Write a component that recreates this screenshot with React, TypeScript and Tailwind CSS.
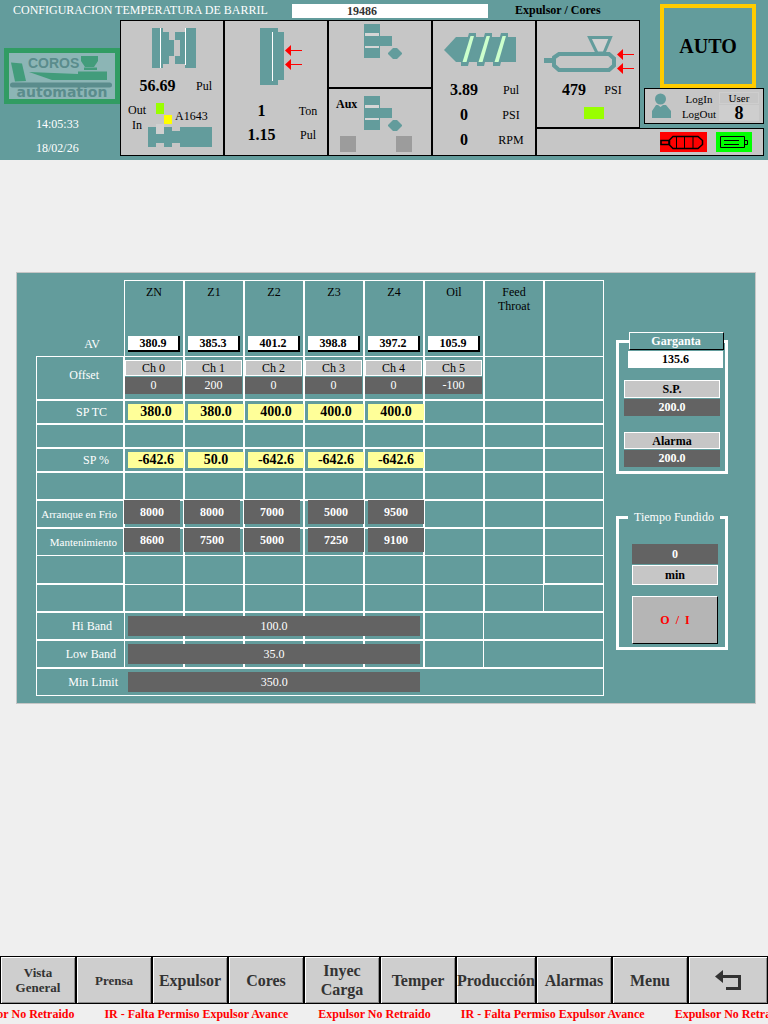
import React from "react";

const ZONES = [
  { name: "ZN", av: "380.9", ch: "Ch 0", offset: "0", tc: "380.0", pct: "-642.6", cold: "8000", hold: "8600" },
  { name: "Z1", av: "385.3", ch: "Ch 1", offset: "200", tc: "380.0", pct: "50.0", cold: "8000", hold: "7500" },
  { name: "Z2", av: "401.2", ch: "Ch 2", offset: "0", tc: "400.0", pct: "-642.6", cold: "7000", hold: "5000" },
  { name: "Z3", av: "398.8", ch: "Ch 3", offset: "0", tc: "400.0", pct: "-642.6", cold: "5000", hold: "7250" },
  { name: "Z4", av: "397.2", ch: "Ch 4", offset: "0", tc: "400.0", pct: "-642.6", cold: "9500", hold: "9100" },
  { name: "Oil", av: "105.9", ch: "Ch 5", offset: "-100" },
  { name: "Feed Throat" },
  { name: "" },
];

const BANDS = [
  { label: "Hi Band", value: "100.0", pad: "pr-3" },
  { label: "Low Band", value: "35.0", pad: "pr-2" },
];

const NAV = [
  { label: "Vista General", size: "text-[13px] leading-[15px] px-3" },
  { label: "Prensa", size: "text-[13px] leading-[15px]" },
  { label: "Expulsor", size: "text-base leading-[19px]" },
  { label: "Cores", size: "text-base leading-[19px]" },
  { label: "Inyec Carga", size: "text-base leading-[19px] px-3" },
  { label: "Temper", size: "text-base leading-[19px]" },
  { label: "Producción", size: "text-base leading-[19px]" },
  { label: "Alarmas", size: "text-base leading-[19px]" },
  { label: "Menu", size: "text-base leading-[19px]" },
];

const ALERTS = [
  "Expulsor No Retraido",
  "IR - Falta Permiso Expulsor Avance",
  "Expulsor No Retraido",
  "IR - Falta Permiso Expulsor Avance",
  "Expulsor No Retraido",
];

const Logo = () => (
  <svg viewBox="0 0 116 56" className="h-14 w-[116px]">
    <rect width="116" height="56" fill="#319c63" />
    <rect x="5" y="5" width="106" height="46" fill="#8cb5b5" />
    <path d="M7 14.5 L18 15.5 L22 33 L11 33.500 Z" fill="#429c7b" />
    <path d="M77 8 H94 V13 L90 19 H81 L77 13 Z" fill="#429c7b" />
    <path d="M80 19.500 H93 V22 H80 Z" fill="#429c7b" />
    <path d="M25 24 L74 26 V23.500 H103 V32 H48 Z" fill="#429c7b" />
    <rect x="6" y="34.500" width="102" height="5" rx="2.500" fill="#5a8c8c" />
    <text x="24" y="20" fontSize="14" fontWeight="bold" fontFamily="Liberation Sans, sans-serif" fill="#5a8c8c">
      COROS
    </text>
    <text x="58" y="49" textAnchor="middle" fontSize="14" fontWeight="bold" fontFamily="DejaVu Sans, sans-serif" fill="#5a8c8c">
      automation
    </text>
  </svg>
);

const MoldIcon = () => (
  <svg viewBox="0 0 44 40" className="ml-[31px] h-10 w-11" fill="#639c9c" shapeRendering="crispEdges">
    <path d="M0 0 H11 V4 H17 V12 H22 V28 H17 V36 H11 V40 H0 Z" />
    <path d="M33 0 H44 V40 H33 V36 H23 V28 H28 V12 H23 V4 H33 Z" />
    <path d="M8 0 H9 V41 H8 Z M33 0 H34 V37 H33 Z" fill="#fff" />
  </svg>
);

const PlateIcon = () => (
  <svg viewBox="0 0 42 57" className="ml-[35px] h-[57px] w-[42px]" fill="#639c9c">
    <path d="M0 0 H18 V4 H24 V52 H18 V57 H0 Z" />
    <path d="M12 4 H13 V53 H12 Z" fill="#fff" />
    <path d="M25 22.500 L31 17 V22 H42 V23 H31 V28 Z M25 36.500 L31 31 V36 H42 V37 H31 V42 Z" fill="#f00" />
  </svg>
);

const CoreIcon = () => (
  <svg viewBox="0 0 38 36" className="h-9 w-[38px]" fill="#639c9c">
    <path d="M0 0 H16 V12 H28 V22 H16 V34 H0 Z" />
    <path d="M1 9 H15 V12 H1 Z M1 22 H15 V24 H1 Z" fill="#d6d6d6" />
    <path d="M29 24 H33 L38 29 V30 L33 35 H29 L24 30 V29 Z" />
  </svg>
);

const ScrewIcon = () => (
  <svg viewBox="0 0 72 36" className="ml-[11px] h-9 w-[72px]" fill="#639c9c">
    <path d="M0 18 L12 5 H72 V30 H12 Z" />
    {[0, 16, 32].map((x) => (
      <g key={x} transform={`translate(${x} 0)`}>
        <path d="M25 1 H32 V5 L25 30 L24 34 H17 V30 Z" />
        <path d="M26.500 4 H30 L22.500 30 H18.500 Z" fill="#cfc" />
      </g>
    ))}
  </svg>
);

const BarrelIcon = () => (
  <svg viewBox="0 0 90 38" className="ml-[7px] h-[38px] w-[90px]" fill="none" stroke="#639c9c">
    <path d="M0 24.500 H10" strokeWidth="5" />
    <path d="M10 21.500 L15 18 H65 L70 22.500 V29.500 L65 34 H15 L10 29.500 Z" strokeWidth="4" />
    <path d="M45.500 1.500 H66.500 L60 17 H53 Z" strokeWidth="3" fill="#d0d0d0" />
    <path d="M73 18.500 L79 13 V18 H90 V19 H79 V24 Z M73 32.500 L79 27 V32 H90 V33 H79 V38 Z" fill="#f00" stroke="none" />
  </svg>
);

const EjectorState = () => (
  <div className="mt-[7px] flex pl-[7px] leading-[15px]">
    <div className="w-5">
      <p>Out</p>
      <p className="pl-1">In</p>
    </div>
    <div>
      <div className="flex items-end pl-2">
        <svg viewBox="0 0 16 21" className="h-[21px] w-4" shapeRendering="crispEdges">
          <path d="M0 0 H8 V11 H0 Z" fill="#9f0" />
          <path d="M8 12 H16 V21 H8 Z" fill="#ff0" />
        </svg>
        <span className="ml-[3px]">A1643</span>
      </div>
      <svg viewBox="0 0 64 23" className="h-[23px] w-16" shapeRendering="crispEdges">
        <path
          d="M0 3 H24 V7 H32 V3 H64 V23 H32 V19 H24 V23 H16 V19 H8 V23 H0 Z"
          fill="#639c9c"
        />
        <path d="M8 0 H16 V10 H8 Z" fill="#d0d0d0" />
      </svg>
    </div>
  </div>
);

type ReadingProps = {
  value: string;
  unit: string;
  unitWidth?: string;
  pad?: string;
  className?: string;
};
const Reading = ({ value, unit, unitWidth = "w-5", pad = "pr-[9px]", className = "" }: ReadingProps) => (
  <div className={`flex h-5 items-center ${pad} ${className}`}>
    <span className="flex-1 text-center text-base leading-5 font-bold">{value}</span>
    <span className={`text-center ${unitWidth}`}>{unit}</span>
  </div>
);

const Header = () => (
  <header className="grid grid-cols-[30fr_repeat(5,26fr)_32fr] grid-rows-[20px_108px_28px] bg-[#639c9c] pb-1">
    <div className="col-span-6 flex items-center">
      <h1 className="w-[292px] pl-[13px] whitespace-nowrap text-white">CONFIGURACION TEMPERATURA DE BARRIL</h1>
      <p className="mt-0.5 h-3.5 flex-1 bg-white pl-[55px] leading-[14px] font-bold text-[#333]">19486</p>
      <p className="w-[152px] pl-[27px] font-bold">Expulsor / Cores</p>
    </div>

    <div className="col-start-7 row-span-2 row-start-1 flex flex-col pt-1">
      <button className="mr-3 ml-5 h-[84px] border-4 border-[#fc0] text-xl font-bold">AUTO</button>
      <div className="mr-1 ml-1 flex h-9 items-center border border-black bg-[#c6c6c6] pl-[7px] text-[11px]">
        <svg viewBox="0 0 19 26" className="h-[26px] w-[19px]" fill="#639c9c">
          <circle cx="8.500" cy="6" r="5.500" />
          <path d="M0 25 V18 L4 12 H6 L8.500 14 L11 12 H14 L19 18 V25 Z" />
        </svg>
        <div className="flex flex-1 flex-col items-center pt-0.5 pl-2 leading-[15px]">
          <button>LogIn</button>
          <button>LogOut</button>
        </div>
        <div className="mr-1 w-10 text-center">
          <p className="h-3 border border-[#cecece] leading-[10px]">User</p>
          <p className="mt-px h-4 bg-[#cecece] text-lg leading-4 font-bold">8</p>
        </div>
      </div>
    </div>

    <div className="row-span-2 flex flex-col pt-7 text-white">
      <div className="pl-1">
        <Logo />
      </div>
      <time className="mt-3 pl-9 leading-4">14:05:33</time>
      <time className="mt-2 pl-9 leading-4">18/02/26</time>
    </div>

    <section className="row-span-2 border border-black bg-[#c6c6c6] pt-[7px]">
      <MoldIcon />
      <Reading value="56.69" unit="Pul" className="mt-2" />
      <EjectorState />
    </section>

    <section className="row-span-2 border border-black bg-[#c6c6c6] pt-[7px]">
      <PlateIcon />
      <Reading value="1" unit="Ton" className="mt-4" />
      <Reading value="1.15" unit="Pul" className="mt-1" />
    </section>

    <section className="row-span-2 grid grid-rows-2">
      <div className="border border-black bg-[#c6c6c6] pt-[3px] pl-[35px]">
        <CoreIcon />
      </div>
      <div className="border border-black bg-[#c6c6c6] pt-[7px]">
        <div className="flex">
          <p className="w-[35px] pl-[7px] leading-4 font-bold">Aux</p>
          <CoreIcon />
        </div>
        <div className="mt-1 flex justify-between pr-[19px] pl-[11px]">
          <span className="h-4 w-4 bg-[#9c9c9c]" />
          <span className="h-4 w-4 bg-[#9c9c9c]" />
        </div>
      </div>
    </section>

    <section className="row-span-2 border border-black bg-[#c6c6c6] pt-[11px]">
      <ScrewIcon />
      <Reading value="3.89" unit="Pul" unitWidth="w-8" pad="pr-2" className="mt-3" />
      <Reading value="0" unit="PSI" unitWidth="w-8" pad="pr-2" className="mt-[5px]" />
      <Reading value="0" unit="RPM" unitWidth="w-8" pad="pr-2" className="mt-[5px]" />
    </section>

    <section className="border border-black bg-[#c6c6c6] pt-[15px]">
      <BarrelIcon />
      <Reading value="479" unit="PSI" pad="pr-4 pl-2" className="mt-1.5" />
      <div className="mt-[7px] ml-[47px] h-3 w-5 bg-[#9f0]" />
    </section>

    <div className="col-span-2 col-start-6 row-start-3 mr-1 flex items-center justify-end gap-[9px] border border-black bg-[#c6c6c6] pr-[11px]">
      <svg viewBox="0 0 47 20" className="h-5 w-[47px] bg-[#f00]" fill="none" stroke="#000">
        <path d="M1 8.500 H9 V12.500 H1 Z" strokeWidth="1.500" />
        <path d="M9.500 8 L13 4.500 H38 L42.500 8.500 V12.500 L38 16.500 H13 L9.500 13 Z" strokeWidth="1.500" />
        <path d="M16.500 4 V16 M24.500 4 V16 M33 4 V16" />
      </svg>
      <svg viewBox="0 0 36 20" className="h-5 w-9 bg-[#0f0]" fill="none" stroke="#000">
        <path d="M4.500 4.500 H28.500 V15.500 H4.500 Z M28.500 8.500 H31.500 V12.500 H28.500 Z M8 8.500 H23 M8 12.500 H23" />
      </svg>
    </div>
  </header>
);

const cell = "border border-white p-0 align-top";
const label = "border border-white p-0 text-right font-normal whitespace-nowrap text-white";

const EmptyCells = ({ count }: { count: number }) => (
  <>
    {Array.from({ length: count }, (_, i) => (
      <td key={i} className={cell} />
    ))}
  </>
);

type SetpointRowProps = {
  title: string;
  pad: string;
  field: "tc" | "pct";
};
const SetpointRow = ({ title, pad, field }: SetpointRowProps) => (
  <tr className="h-6">
    <th scope="row" className={`${label} ${pad}`}>
      {title}
    </th>
    {ZONES.slice(0, 5).map((zone) => (
      <td key={zone.name} className={cell}>
        <input
          aria-label={`${title} ${zone.name}`}
          defaultValue={zone[field]}
          className="mt-[3px] ml-[3px] block h-4 w-[calc(100%-2px)] bg-[#ff9] text-center text-sm leading-4 font-bold"
        />
      </td>
    ))}
    <EmptyCells count={3} />
  </tr>
);

type HeatRowProps = {
  title: string;
  field: "cold" | "hold";
};
const HeatRow = ({ title, field }: HeatRowProps) => (
  <tr className="h-7">
    <th scope="row" className={`${label} pr-1.5 text-[11px]`}>
      {title}
    </th>
    {ZONES.slice(0, 5).map((zone, i) => (
      <td key={zone.name} className={cell}>
        <input
          aria-label={`${title} ${zone.name}`}
          defaultValue={zone[field]}
          className={`-mt-px block h-6 w-[calc(100%-2px)] bg-[#636363] text-center font-bold text-white ${
            i < 3 ? "-ml-px" : "ml-[3px]"
          }`}
        />
      </td>
    ))}
    <EmptyCells count={3} />
  </tr>
);

const bar = "absolute top-[3px] left-[3px] h-5 bg-[#636363] text-center text-white";

const ZoneTable = () => (
  <table className="w-full table-fixed border-separate border-spacing-0">
    <colgroup>
      <col className="w-[88px]" />
      <col span={8} />
    </colgroup>
    <thead>
      <tr className="h-[76px]">
        <th scope="row" className="p-0 pr-6 pb-1 text-right align-bottom leading-4 font-normal text-white">
          AV
        </th>
        {ZONES.map((zone) => (
          <th key={zone.name} className={`${cell} border-b-0 font-normal`}>
            <div className="flex h-[71px] flex-col justify-between pt-1 leading-[14px]">
              <span className="px-1">{zone.name}</span>
              {zone.av && (
                <output className="mr-[3px] ml-[3px] h-4 border-r-2 border-b-2 border-black bg-white leading-[15px] font-bold">
                  {zone.av}
                </output>
              )}
            </div>
          </th>
        ))}
      </tr>
    </thead>
    <tbody>
      <tr className="h-11">
        <th scope="row" className={`${label} pr-6 pb-1.5`}>
          Offset
        </th>
        {ZONES.slice(0, 6).map((zone) => (
          <td key={zone.name} className={cell}>
            <label className="mr-px block pt-[3px] text-center">
              <span className="block h-4 border border-white bg-[#c6c6c6] leading-[14px]">{zone.ch}</span>
              <input
                defaultValue={zone.offset}
                className="mt-px block h-[17px] w-full bg-[#636363] text-center leading-4 text-white"
              />
            </label>
          </td>
        ))}
        <EmptyCells count={2} />
      </tr>
      <SetpointRow title="SP TC" pad="pr-4" field="tc" />
      <tr className="h-6">
        <EmptyCells count={9} />
      </tr>
      <SetpointRow title="SP %" pad="pr-3.5" field="pct" />
      <tr className="h-7">
        <EmptyCells count={9} />
      </tr>
      <HeatRow title="Arranque en Frio" field="cold" />
      <HeatRow title="Mantenimiento" field="hold" />
      <tr className="h-7">
        <td className={`${cell} border-t-0`} />
        {ZONES.map((zone, i) => (
          <td key={zone.name} className={i < 7 ? `${cell} border-y-0` : `${cell} border-t-0`} />
        ))}
      </tr>
      <tr className="h-7">
        <EmptyCells count={8} />
        <td className={`${cell} border-l-0`} />
      </tr>
      {BANDS.map((band) => (
        <tr key={band.label} className="h-7">
          <th scope="row" className={`${label} border-r-0 ${band.pad}`}>
            {band.label}
          </th>
          <td className={`${cell} relative z-10`}>
            <input aria-label={band.label} defaultValue={band.value} className={`${bar} w-[calc(500%+2px)]`} />
          </td>
          <EmptyCells count={5} />
          <td colSpan={2} className={`${cell} border-l-0`} />
        </tr>
      ))}
      <tr className="h-7">
        <th scope="row" className={`${label} border-r-0 pr-1.5`}>
          Min Limit
        </th>
        <td colSpan={8} className={`${cell} border-l-0`}>
          <input
            aria-label="Min Limit"
            defaultValue="350.0"
            className="mt-[3px] ml-1 block h-5 w-[calc(62.5%-7px)] bg-[#636363] text-center text-white"
          />
        </td>
      </tr>
    </tbody>
  </table>
);

const SidePanels = () => (
  <div className="mr-[27px] w-28 shrink-0 pt-[52px]">
    <fieldset className="min-w-0 border-[3px] border-white px-[5px] pb-1 font-bold">
      <legend className="ml-1 h-[18px] w-[95px] border border-t-white border-r-black border-b-black border-l-white text-center leading-4 text-white">
        Garganta
      </legend>
      <output className="mt-px ml-1 block h-[17px] w-[95px] bg-white text-center leading-[17px]">135.6</output>
      <label className="mt-3 block text-center">
        <span className="block h-[18px] border border-white bg-[#c6c6c6] leading-4">S.P.</span>
        <input defaultValue="200.0" className="mt-px block h-[17px] w-full bg-[#636363] text-center text-white" />
      </label>
      <label className="mt-4 block text-center">
        <span className="block h-[17px] border border-white bg-[#c6c6c6] leading-4">Alarma</span>
        <input defaultValue="200.0" className="mt-px block h-[17px] w-full bg-[#636363] text-center text-white" />
      </label>
    </fieldset>

    <fieldset className="mt-9 min-w-0 border-[3px] border-white pt-[19px] pr-[7px] pb-[3px] pl-[13px] font-bold">
      <legend className="-ml-1 w-[92px] text-center leading-[15px] font-normal whitespace-nowrap text-white">
        Tiempo Fundido
      </legend>
      <label className="block text-center">
        <input defaultValue="0" className="block h-5 w-full bg-[#636363] text-center text-white" />
        <span className="mt-px block h-5 border border-white bg-[#c6c6c6] leading-[18px]">min</span>
      </label>
      <button className="mt-[11px] block h-12 w-full border border-t-white border-r-black border-b-black border-l-white bg-[#b5b5b5] whitespace-pre text-[#f00]">
        O  /  I
      </button>
    </fieldset>
  </div>
);

const Footer = () => (
  <footer>
    <nav className="grid h-12 grid-cols-[repeat(6,19fr)_20fr_19fr_19fr_20fr]">
      {NAV.map((item) => (
        <button
          key={item.label}
          className={`border border-black bg-[#cecece] font-bold text-[#333] shadow-[inset_1px_1px_0_#fff,inset_-1px_-1px_0_#8c8c8c] ${item.size}`}
        >
          {item.label}
        </button>
      ))}
      <button
        aria-label="Volver"
        className="border border-black bg-[#cecece] shadow-[inset_1px_1px_0_#fff,inset_-1px_-1px_0_#8c8c8c]"
      >
        <svg viewBox="0 0 26 20" className="mx-auto h-5 w-[26px]" fill="#333">
          <path d="M0 6.500 L8 0 V5 H26 V20 H11 V17 H23 V8 H8 V13 Z" />
        </svg>
      </button>
    </nav>
    <div className="flex h-5 gap-[30px] overflow-hidden leading-5 font-bold whitespace-nowrap text-[#f00]">
      {ALERTS.map((alert, i) => (
        <span key={i} className={i === 0 ? "-ml-[38px]" : ""}>
          {alert}
        </span>
      ))}
    </div>
  </footer>
);

const App = () => {
  return (
    <div className="flex min-h-screen flex-col bg-[#efefef] font-['Liberation_Serif',serif] text-xs text-black">
      <Header />
      <main className="flex-1 pt-28 pr-3 pb-8 pl-4">
        <section className="flex gap-3 border border-[#c6c6c6] bg-[#639c9c] py-[7px] pl-[19px]">
          <div className="min-w-0 flex-1">
            <ZoneTable />
          </div>
          <SidePanels />
        </section>
      </main>
      <Footer />
    </div>
  );
};

export default App;
